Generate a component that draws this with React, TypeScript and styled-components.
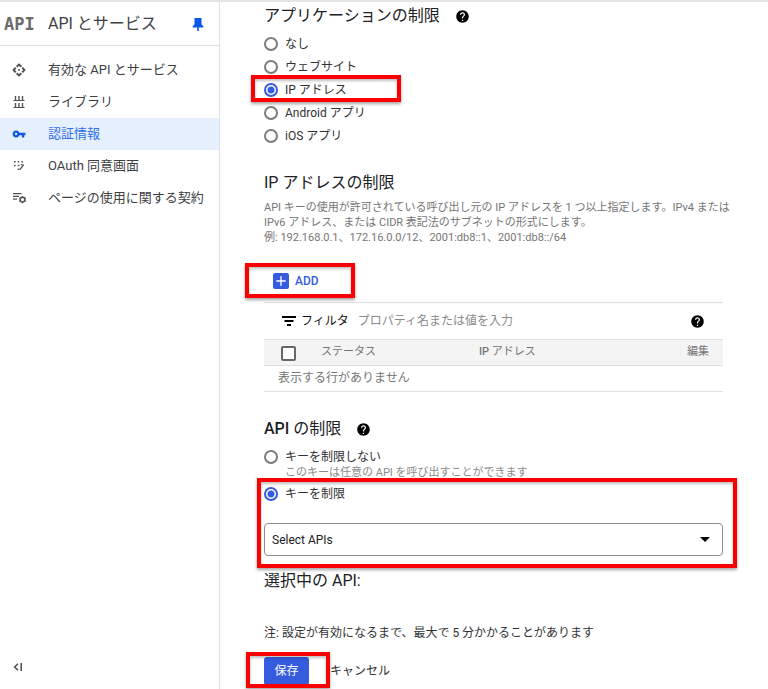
import React, { useState } from "react";
import styled, { createGlobalStyle, css } from "styled-components";
import { MdAdd, MdHelp, MdVpnKey } from "react-icons/md";

const blue = "#355cdf";

const GlobalStyle = createGlobalStyle`
  *, *::before, *::after { box-sizing: border-box; }
  body { margin: 0; background: #fff; }
  body, button, input, select {
    font-family: Roboto, "Noto Sans CJK JP", sans-serif;
    font-size: 12px;
    line-height: 16px;
    color: #303134;
  }
`;

const Page = styled.div`
  display: flex;
  min-height: 100vh;
  border-top: 2px solid #e4e5e8;
`;

const Sidebar = styled.aside`
  display: flex;
  flex-direction: column;
  flex: 0 0 220px;
  border-right: 1px solid #dfe0e3;
`;

const Brand = styled.header`
  display: flex;
  align-items: center;
  height: 44px;
  padding: 0 14px 0 4px;
  border-bottom: 1px solid #dfe0e3;
`;

const Logo = styled.span`
  width: 44px;
  font: bold 17px/20px "DejaVu Sans Mono", monospace;
  color: #6b6b6b;
`;

const BrandName = styled.h1`
  flex: 1;
  margin: 0;
  font-size: 16px;
  line-height: 24px;
  font-weight: 400;
  color: #3c4043;
`;

const PlainButton = styled.button`
  display: inline-flex;
  align-items: center;
  padding: 0;
  border: 0;
  background: none;
  cursor: pointer;
`;

const PinButton = styled(PlainButton)`
  color: #0b57e8;
`;

const Nav = styled.nav`
  display: flex;
  flex-direction: column;
  flex: 1;
  padding-top: 8px;
`;

const NavLink = styled.a<{ $active?: boolean }>`
  display: flex;
  align-items: center;
  gap: 22px;
  height: 32px;
  padding-left: 12px;
  font-size: 13px;
  white-space: nowrap;
  text-decoration: none;
  color: ${(p) => (p.$active ? "#2f70ea" : "#3c4043")};
  background: ${(p) => (p.$active ? "#e6effd" : "transparent")};
  svg {
    flex: none;
    color: ${(p) => (p.$active ? "#0b57e8" : "#505358")};
  }
`;

const SidebarFooter = styled.footer`
  padding: 0 12px 12px;
  button { color: #505358; }
`;

const Main = styled.main`
  flex: 1;
  min-width: 0;
  padding: 2px 45px 0 44px;
`;

const Heading = styled.h2<{ $top?: number; $bottom?: number }>`
  display: flex;
  align-items: center;
  gap: 15px;
  margin: ${(p) => p.$top ?? 0}px 0 ${(p) => p.$bottom ?? 0}px;
  font-size: 16px;
  line-height: 24px;
  font-weight: 400;
  color: #202124;
  svg { color: #000; }
`;

const Medium = styled.span`
  font-weight: 500;
`;

const Group = styled.div`
  display: flex;
  flex-direction: column;
  gap: 3px;
`;

const RadioLabel = styled.label`
  position: relative;
  display: flex;
  align-items: center;
  gap: 7px;
  height: 20px;
`;

const Radio = styled.input.attrs({ type: "radio" })`
  appearance: none;
  width: 14px;
  height: 14px;
  margin: 0;
  border: 2px solid #7c7c7c;
  border-radius: 50%;
  &:checked {
    border-color: ${blue};
    background: radial-gradient(circle, ${blue} 3px, #fff 4px);
  }
`;

const callout = css`
  position: absolute;
  border: 4px solid #fb0000;
  box-shadow: 0 2px 3px rgba(0, 0, 0, 0.35), inset 0 2px 3px rgba(0, 0, 0, 0.25);
  pointer-events: none;
`;

const Callout = styled.span<{ $top: number; $left: number; $width?: number; $right?: number; $height: number }>`
  ${callout}
  top: ${(p) => p.$top}px;
  left: ${(p) => p.$left}px;
  height: ${(p) => p.$height}px;
  ${(p) => (p.$width === undefined ? `right: ${p.$right}px;` : `width: ${p.$width}px;`)}
`;

const Description = styled.p`
  margin: 5px 0 0;
  font-size: 11px;
  line-height: 15px;
  white-space: nowrap;
  color: #757575;
`;

const AddBar = styled.div`
  position: relative;
  display: flex;
  height: 32px;
  margin: 20px 0 5px;
  padding-left: 9px;
`;

const AddButton = styled(PlainButton)`
  gap: 6px;
  font-weight: 500;
  color: ${blue};
  svg {
    border-radius: 2px;
    background: ${blue};
    color: #fff;
    stroke: #fff;
  }
`;

const FilterBar = styled.div`
  display: flex;
  align-items: center;
  height: 37px;
  padding: 0 18px 0 17px;
  border-top: 1px solid #e0e0e0;
  svg { flex: none; color: #000; }
`;

const FilterLabel = styled.label`
  display: flex;
  align-items: center;
  gap: 4px;
  flex: none;
  color: #111;
`;

const FilterInput = styled.input`
  flex: 1;
  min-width: 0;
  margin-left: 9px;
  padding: 0;
  border: 0;
  outline: 0;
  &::placeholder { color: #8b8b8b; opacity: 1; }
`;

const Table = styled.table`
  width: 100%;
  table-layout: fixed;
  border-collapse: collapse;
  color: #757575;
  th, td {
    height: 26px;
    padding: 0 0 2px;
    border-top: 1px solid #e0e0e0;
    border-bottom: 1px solid #e0e0e0;
    text-align: left;
    font-weight: 400;
  }
  th {
    font-size: 11px;
    background: #f4f4f4;
  }
`;

const CheckCell = styled.th`
  width: 57px;
`;

const StatusCell = styled.th`
  width: 158px;
`;

const EditCell = styled.th`
  width: 36px;
`;

const EmptyCell = styled.td`
  text-indent: 14px;
`;

const Checkbox = styled.input.attrs({ type: "checkbox" })`
  appearance: none;
  display: block;
  width: 15px;
  height: 15px;
  margin: 4px 0 0 17px;
  border: 2px solid #686868;
  border-radius: 2px;
  background: #fff;
  &:checked { background: ${blue}; }
`;

const Hint = styled.p`
  margin: -2px 0 4px 21px;
  font-size: 11px;
  line-height: 15px;
  color: #8a8a8a;
`;

const KeyGroup = styled.div`
  position: relative;
`;

const SelectBox = styled.div`
  position: relative;
  margin-top: 19px;
  svg {
    position: absolute;
    top: 14px;
    right: 13px;
    pointer-events: none;
  }
`;

const Select = styled.select`
  appearance: none;
  display: block;
  width: 100%;
  height: 33px;
  padding: 0 32px 0 7px;
  border: 1px solid #8b9096;
  border-radius: 4px;
  background: #fff;
  color: #202124;
`;

const Note = styled.p`
  margin: 30px 0 14px;
  line-height: 20px;
`;

const Actions = styled.div`
  position: relative;
  display: flex;
  align-items: center;
  gap: 21px;
`;

const SaveButton = styled(PlainButton)`
  justify-content: center;
  width: 45px;
  height: 28px;
  border-radius: 3px;
  background: ${blue};
  color: #fff;
`;

const PinIcon = () => (
  <svg width="14" height="16" viewBox="0 0 14 16" fill="currentColor">
    <path d="M3.5 2h7v6.2l1.8 2v1.4H7.8V15H6.2v-3.4H1.7v-1.4l1.8-2z" />
  </svg>
);

const ApiIcon = () => (
  <svg width="14" height="14" viewBox="0 0 14 14" fill="none" stroke="currentColor" strokeWidth="2">
    <path d="M4.6 3.7 7 1.6l2.4 2.1M4.6 10.3 7 12.4l2.4-2.1M3.7 4.6 1.6 7l2.1 2.4M10.3 4.6 12.4 7l-2.1 2.4" />
    <circle cx="7" cy="7" r="1" fill="currentColor" stroke="none" />
  </svg>
);

const LibraryIcon = () => (
  <svg width="14" height="14" viewBox="0 0 14 14" stroke="currentColor" strokeWidth="1.4">
    <path d="M3.5 1v4M7 1v4M10.5 1v4M3.5 8v4M7 8v4M10.5 8v4" />
    <path d="M1.5 5.5h11M1.5 12.5h11" strokeWidth="1.2" />
  </svg>
);

const ConsentIcon = () => (
  <svg width="14" height="14" viewBox="0 0 14 14" fill="currentColor">
    <path d="M2 2h1.6v1.6H2zM5.7 2h1.6v1.6H5.7zM9.4 2H11v1.6H9.4zM2 5.7h1.6v1.6H2zM5.7 5.7h1.6v1.6H5.7zM5.7 9.4h1.6V11H5.7z" />
    <path d="m11.8 5.6-4 5M10.4 5.6h-1.6" fill="none" stroke="currentColor" strokeWidth="1.4" />
  </svg>
);

const AgreementIcon = () => (
  <svg width="16" height="14" viewBox="0 0 16 14" fill="none" stroke="currentColor">
    <path d="M1 2.6h8.5M1 5.4h6M1 8.2h4" strokeWidth="1.3" />
    <circle cx="10.5" cy="8.6" r="2.4" strokeWidth="1.5" />
    <path
      d="M10.5 4.9v1.3M10.5 11v1.3M7.3 6.75l1.1.65M12.6 9.8l1.1.65M7.3 10.45l1.1-.65M12.6 7.4l1.1-.65"
      strokeWidth="1.3"
    />
  </svg>
);

const FilterIcon = () => (
  <svg width="16" height="16" viewBox="0 0 16 16" stroke="currentColor" strokeWidth="2">
    <path d="M1 4h14M3.5 8h9M6 12h4" />
  </svg>
);

const CollapseIcon = () => (
  <svg width="12" height="12" viewBox="0 0 12 12" fill="none" stroke="currentColor" strokeWidth="1.6">
    <path d="M6 2.7 2.7 6 6 9.3M9.2 2v8" />
  </svg>
);

const navItems = [
  { label: "有効な API とサービス", icon: <ApiIcon /> },
  { label: "ライブラリ", icon: <LibraryIcon /> },
  { label: "認証情報", icon: <MdVpnKey size={14} />, active: true },
  { label: "OAuth 同意画面", icon: <ConsentIcon /> },
  { label: "ページの使用に関する契約", icon: <AgreementIcon />, wide: true },
];

const WideIconLink = styled(NavLink)`
  gap: 20px;
`;

const appTypes = ["なし", "ウェブサイト", "IP アドレス", "Android アプリ", "iOS アプリ"];

export default function App() {
  const [appType, setAppType] = useState("IP アドレス");
  const [restricted, setRestricted] = useState(true);

  return (
    <>
      <GlobalStyle />
      <Page>
        <Sidebar>
          <Brand>
            <Logo>API</Logo>
            <BrandName>API とサービス</BrandName>
            <PinButton aria-label="固定"><PinIcon /></PinButton>
          </Brand>
          <Nav>
            {navItems.map((item) => {
              const Link = item.wide ? WideIconLink : NavLink;
              return (
                <Link key={item.label} href="#" $active={item.active}>
                  {item.icon}
                  {item.label}
                </Link>
              );
            })}
          </Nav>
          <SidebarFooter>
            <PlainButton aria-label="メニューを閉じる"><CollapseIcon /></PlainButton>
          </SidebarFooter>
        </Sidebar>

        <Main>
          <Heading $bottom={6}>アプリケーションの制限 <MdHelp size={15} /></Heading>
          <Group role="radiogroup">
            {appTypes.map((type) => (
              <RadioLabel key={type}>
                <Radio name="app" checked={appType === type} onChange={() => setAppType(type)} />
                {type}
                {type === "IP アドレス" && <Callout $top={-5} $left={-13} $width={150} $height={27} />}
              </RadioLabel>
            ))}
          </Group>

          <Heading $top={25}>IP アドレスの制限</Heading>
          <Description>
            API キーの使用が許可されている呼び出し元の IP アドレスを 1 つ以上指定します。IPv4 または<br />
            IPv6 アドレス、または CIDR 表記法のサブネットの形式にします。<br />
            例: 192.168.0.1、172.16.0.0/12、2001:db8::1、2001:db8::/64
          </Description>

          <AddBar>
            <AddButton><MdAdd size={16} />ADD</AddButton>
            <Callout $top={-2} $left={-19} $width={110} $height={35} />
          </AddBar>

          <FilterBar>
            <FilterLabel htmlFor="filter"><FilterIcon />フィルタ</FilterLabel>
            <FilterInput id="filter" placeholder="プロパティ名または値を入力" />
            <MdHelp size={15} />
          </FilterBar>
          <Table>
            <thead>
              <tr>
                <CheckCell><Checkbox aria-label="すべて選択" /></CheckCell>
                <StatusCell>ステータス</StatusCell>
                <th><Medium>IP</Medium> アドレス</th>
                <EditCell>編集</EditCell>
              </tr>
            </thead>
            <tbody>
              <tr><EmptyCell colSpan={4}>表示する行がありません</EmptyCell></tr>
            </tbody>
          </Table>

          <Heading $top={25} $bottom={6}><span><Medium>API</Medium> の制限</span><MdHelp size={15} /></Heading>
          <RadioLabel>
            <Radio name="key" checked={!restricted} onChange={() => setRestricted(false)} />
            キーを制限しない
          </RadioLabel>
          <Hint>このキーは任意の API を呼び出すことができます</Hint>
          <KeyGroup>
            <RadioLabel>
              <Radio name="key" checked={restricted} onChange={() => setRestricted(true)} />
              キーを制限
            </RadioLabel>
            <SelectBox>
              <Select aria-label="Select APIs"><option>Select APIs</option></Select>
              <svg width="10" height="5" viewBox="0 0 10 5"><path d="M0 0h10L5 5z" /></svg>
            </SelectBox>
            <Callout $top={-6} $left={-7} $right={-14} $height={90} />
          </KeyGroup>

          <Heading $top={13}>選択中の API:</Heading>
          <Note>注: 設定が有効になるまで、最大で 5 分かかることがあります</Note>
          <Actions>
            <SaveButton>保存</SaveButton>
            <PlainButton>キャンセル</PlainButton>
            <Callout $top={-5} $left={-18} $width={84} $height={36} />
          </Actions>
        </Main>
      </Page>
    </>
  );
}
